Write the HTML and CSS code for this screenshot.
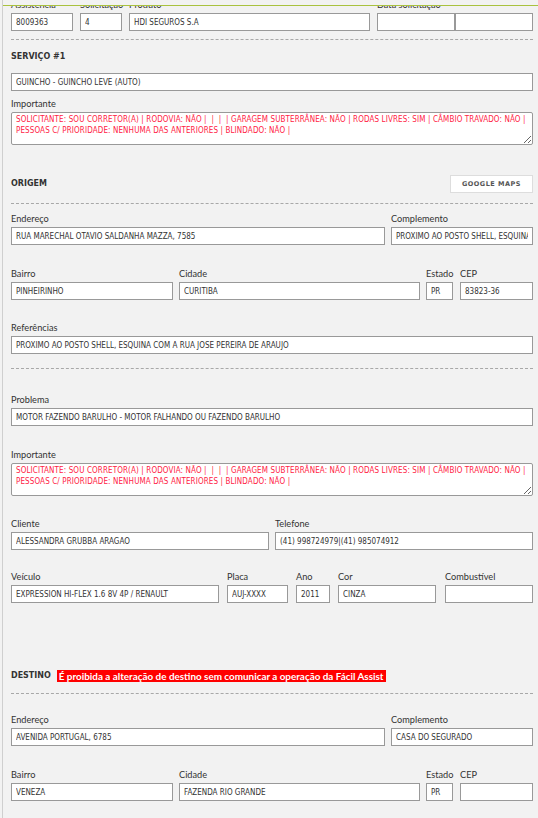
FILE: index.html
```html
<!DOCTYPE html>
<html lang="pt-BR">
<head>
<meta charset="utf-8">
<title>Atendimento</title>
<link rel="stylesheet" href="styles.css">
</head>
<body>
<div class="topbar"></div>
<div class="page">
  <div class="row r-top">
    <div class="field w62"><label>Assistência</label><input type="text" value="8009363" readonly></div>
    <div class="field w42"><label>Solicitação</label><input type="text" value="4" readonly></div>
    <div class="field w241"><label>Produto</label><input type="text" value="HDI SEGUROS S.A" readonly></div>
    <div class="field grow"><label>Data solicitação</label>
      <div class="pair"><input type="text" value="" readonly><input type="text" value="" readonly></div>
    </div>
  </div>
  <div class="sep s1"></div>

  <h3 class="heading h-servico">SERVIÇO #1</h3>
  <input class="solo" type="text" value="GUINCHO - GUINCHO LEVE (AUTO)" readonly>
  <div class="field f-imp1"><label>Importante</label><textarea class="warn" readonly>SOLICITANTE: SOU CORRETOR(A) | RODOVIA: NÃO |  |  |  | GARAGEM SUBTERRÂNEA: NÃO | RODAS LIVRES: SIM | CÂMBIO TRAVADO: NÃO |
PESSOAS C/ PRIORIDADE: NENHUMA DAS ANTERIORES | BLINDADO: NÃO |</textarea></div>

  <div class="head-row hr-origem">
    <h3 class="heading">ORIGEM</h3>
    <button class="btn-maps" type="button">GOOGLE MAPS</button>
  </div>
  <div class="sep s2"></div>

  <div class="row gap6 r-end1">
    <div class="field w374"><label>Endereço</label><input type="text" value="RUA MARECHAL OTÁVIO SALDANHA MAZZA, 7585" readonly></div>
    <div class="field grow"><label>Complemento</label><input type="text" value="PROXIMO AO POSTO SHELL, ESQUINA COM A RUA JOSE PEREIRA DE ARAUJO" readonly></div>
  </div>
  <div class="row r-bairro1">
    <div class="field w162"><label>Bairro</label><input type="text" value="PINHEIRINHO" readonly></div>
    <div class="field w241 ml6"><label>Cidade</label><input type="text" value="CURITIBA" readonly></div>
    <div class="field w27 ml6"><label>Estado</label><input type="text" value="PR" readonly></div>
    <div class="field grow ml7"><label>CEP</label><input type="text" value="83823-36" readonly></div>
  </div>
  <div class="field r-ref"><label>Referências</label><input type="text" value="PROXIMO AO POSTO SHELL, ESQUINA COM A RUA JOSE PEREIRA DE ARAUJO" readonly></div>
  <div class="sep s3"></div>

  <div class="field r-prob"><label>Problema</label><input type="text" value="MOTOR FAZENDO BARULHO - MOTOR FALHANDO OU FAZENDO BARULHO" readonly></div>
  <div class="field r-imp2"><label>Importante</label><textarea class="warn" readonly>SOLICITANTE: SOU CORRETOR(A) | RODOVIA: NÃO |  |  |  | GARAGEM SUBTERRÂNEA: NÃO | RODAS LIVRES: SIM | CÂMBIO TRAVADO: NÃO |
PESSOAS C/ PRIORIDADE: NENHUMA DAS ANTERIORES | BLINDADO: NÃO |</textarea></div>
  <div class="row gap6 r-cli">
    <div class="field half"><label>Cliente</label><input type="text" value="ALESSANDRA GRUBBA ARAGAO" readonly></div>
    <div class="field half"><label>Telefone</label><input type="text" value="(41) 998724979|(41) 985074912" readonly></div>
  </div>
  <div class="row r-veic">
    <div class="field w208"><label>Veículo</label><input type="text" value="EXPRESSION HI-FLEX 1.6 8V 4P / RENAULT" readonly></div>
    <div class="field w61 ml8"><label>Placa</label><input type="text" value="AUJ-XXXX" readonly></div>
    <div class="field w34 ml8"><label>Ano</label><input type="text" value="2011" readonly></div>
    <div class="field w98 ml8"><label>Cor</label><input type="text" value="CINZA" readonly></div>
    <div class="field grow ml9"><label>Combustível</label><input type="text" value="" readonly></div>
  </div>

  <div class="head-row hr-destino">
    <h3 class="heading">DESTINO</h3>
    <span class="alert">É proibida a alteração de destino sem comunicar a operação da Fácil Assist</span>
  </div>
  <div class="sep s4"></div>

  <div class="row gap6 r-end2">
    <div class="field w374"><label>Endereço</label><input type="text" value="AVENIDA PORTUGAL, 6785" readonly></div>
    <div class="field grow"><label>Complemento</label><input type="text" value="CASA DO SEGURADO" readonly></div>
  </div>
  <div class="row r-bairro2">
    <div class="field w162"><label>Bairro</label><input type="text" value="VENEZA" readonly></div>
    <div class="field w241 ml6"><label>Cidade</label><input type="text" value="FAZENDA RIO GRANDE" readonly></div>
    <div class="field w27 ml6"><label>Estado</label><input type="text" value="PR" readonly></div>
    <div class="field grow ml7"><label>CEP</label><input type="text" value="" readonly></div>
  </div>
</div>
</body>
</html>
```
FILE: styles.css
```css
* { box-sizing: border-box; }
html, body { margin: 0; padding: 0; }
body {
  background: #f2f2f2;
  font-family: "Lato", "DejaVu Sans", sans-serif;
  color: #333;
  overflow: hidden;
}
.topbar {
  position: fixed;
  top: 0; left: 3px; right: 0;
  height: 6px;
  background: #f2f2f2;
  border-bottom: 1px solid #a9c23f;
  z-index: 5;
}
.page {
  margin-left: 2px;
  border-left: 1px solid #cfcfcf;
  padding: 0 5px 0 8px;
  min-height: 900px;
  overflow: hidden;
}
.row { display: flex; align-items: flex-start; }
.gap6 { gap: 6px; }
.field { display: block; }
.field label {
  display: block;
  font-size: 9.2px;
  line-height: 13px;
  height: 13px;
  margin-bottom: 2px;
  white-space: nowrap;
  color: #333;
}
input, textarea {
  display: block;
  width: 100%;
  height: 18px;
  margin: 0;
  border: 1px solid #999;
  border-radius: 0;
  background: #fff;
  padding: 0 4px;
  font-family: "DejaVu Sans Condensed", "DejaVu Sans", sans-serif;
  font-size: 8px;
  color: #333;
  outline: none;
}
textarea {
  height: 33px;
  border-radius: 2px;
  padding: 2px 4px 0;
  line-height: 10.5px;
  resize: vertical;
  overflow: hidden;
  letter-spacing: 0.11px;
}
textarea.warn { color: #ff2244; }

.w62 { width: 62px; }
.w42 { width: 42px; margin-left: 7px; }
.r-top .w241 { margin-left: 7px; }
.r-top .grow { margin-left: 7px; }
.w241 { width: 241px; }
.w374 { width: 374px; }
.w162 { width: 162px; }
.w27 { width: 27px; }
.w208 { width: 208px; }
.w61 { width: 61px; }
.w34 { width: 34px; }
.w98 { width: 98px; }
.half { flex: 1 1 0; }
.grow { flex: 1 1 0; min-width: 0; }
.ml6 { margin-left: 6px; }
.ml7 { margin-left: 7px; }
.ml8 { margin-left: 8px; }
.ml9 { margin-left: 9px; }
.pair { display: flex; }
.pair input { flex: 1 1 0; min-width: 0; }

.sep { border-top: 1px dashed #a8a8a8; height: 0; }
.heading {
  margin: 0;
  font-family: "DejaVu Sans", sans-serif;
  font-weight: bold;
  font-size: 8px;
  line-height: 12px;
  color: #333;
}
.head-row { display: flex; align-items: center; }
.hr-origem { justify-content: space-between; height: 18px; }
.btn-maps {
  width: 83px;
  height: 18px;
  background: #fff;
  border: 1px solid #ddd;
  padding: 0;
  font-family: "DejaVu Sans", sans-serif;
  font-weight: bold;
  font-size: 6.5px;
  letter-spacing: 0.5px;
  color: #555;
}
.alert {
  margin-left: 6px;
  background: #f00;
  color: #fff;
  font-weight: bold;
  font-size: 9.9px;
  line-height: 12px;
  height: 12px;
  padding: 0 2px;
  white-space: nowrap;
}

.r-top { margin-top: -2px; }
.s1 { margin-top: 8px; }
.h-servico { margin-top: 11px; }
.solo { margin-top: 10px; }
.f-imp1 { margin-top: 6px; }
.hr-origem { margin-top: 30px; }
.s2 { margin-top: 10px; }
.r-end1 { margin-top: 8px; }
.r-bairro1 { margin-top: 22px; }
.r-ref { margin-top: 21px; }
.s3 { margin-top: 14px; }
.r-prob { margin-top: 24px; }
.r-imp2 { margin-top: 22px; }
.r-cli { margin-top: 21px; }
.r-veic { margin-top: 20px; }
.hr-destino { margin-top: 67px; height: 12px; }
.s4 { margin-top: 11px; }
.r-end2 { margin-top: 19px; }
.r-bairro2 { margin-top: 22px; }
```
